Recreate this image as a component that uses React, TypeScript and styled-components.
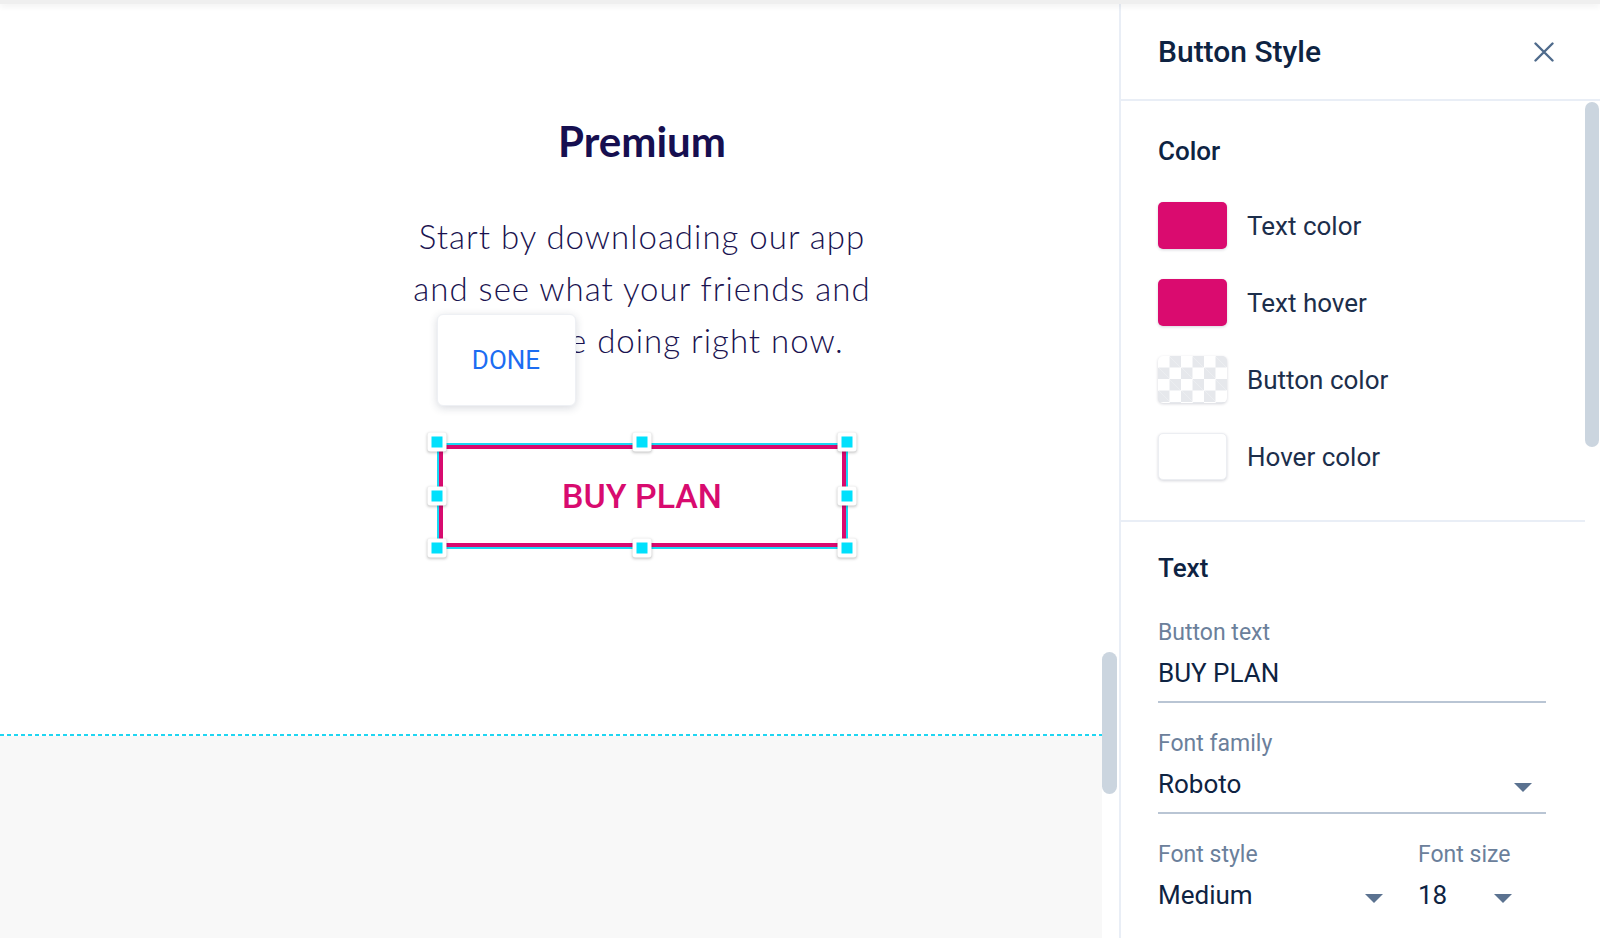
import React from "react";
import styled, { createGlobalStyle, css } from "styled-components";

const GlobalStyle = createGlobalStyle`
  html, body { margin: 0; padding: 0; background: #ffffff; }
  body { font-family: Roboto, "Liberation Sans", Arial, sans-serif; overflow: hidden; }
  * { box-sizing: border-box; }
`;

const Page = styled.div`
  width: 1600px;
  height: 938px;
  display: flex;
  flex-direction: column;
  overflow: hidden;
`;

const TopBar = styled.div`
  flex: 0 0 4px;
  height: 4px;
  background: #efefef;
  position: relative;
  z-index: 2;
  box-shadow: 0 2px 6px rgba(0, 0, 0, 0.08);
`;

const Main = styled.div`
  flex: 1;
  display: flex;
  min-height: 0;
`;

/* ---------- Canvas ---------- */

const Canvas = styled.div`
  flex: 0 0 1119px;
  position: relative;
  display: flex;
  flex-direction: column;
`;

const Stage = styled.section`
  flex: 0 0 730px;
  width: 1102px;
  padding: 113px 0 0 182px;
  display: flex;
  flex-direction: column;
  align-items: center;
`;

const Heading = styled.h1`
  margin: 0;
  font-family: Lato, "Open Sans", sans-serif;
  font-weight: 700;
  font-size: 42px;
  line-height: 48px;
  color: #160f50;
`;

const Lead = styled.p`
  margin: 45px 0 0;
  font-family: Lato, "Open Sans", sans-serif;
  font-weight: 300;
  font-size: 33px;
  letter-spacing: 1px;
  line-height: 52px;
  color: #1a1350;
  text-align: center;
  white-space: nowrap;
`;

const Frame = styled.div`
  position: relative;
  margin-top: 77px;
  width: 411px;
  height: 106px;
  border: 2px solid #18d9f5;
`;

const BuyButton = styled.button`
  width: 100%;
  height: 100%;
  border: 4px solid #d80b6f;
  background: #ffffff;
  color: #d80b6f;
  font-family: Roboto, sans-serif;
  font-weight: 500;
  font-size: 34px;
  padding: 0;
  cursor: pointer;
`;

type Pos = "start" | "mid" | "end";
const posX = (p: Pos) =>
  p === "start" ? "-1.5px" : p === "mid" ? "50%" : "calc(100% + 1px)";
const posY = (p: Pos) =>
  p === "start" ? "-3px" : p === "mid" ? "50%" : "calc(100% + 1px)";

const Handle = styled.span<{ $x: Pos; $y: Pos }>`
  position: absolute;
  width: 19px;
  height: 19px;
  border-radius: 3px;
  background: #ffffff;
  box-shadow: 0 1px 3px rgba(0, 0, 0, 0.22);
  transform: translate(-50%, -50%);
  ${({ $x, $y }) => css`
    left: ${posX($x)};
    top: ${posY($y)};
  `}
  &::after {
    content: "";
    position: absolute;
    left: 4px;
    top: 4px;
    width: 11px;
    height: 11px;
    background: #00e0fc;
  }
`;

const DonePopup = styled.button`
  position: absolute;
  left: -2px;
  top: -131px;
  width: 139px;
  height: 92px;
  border: 1px solid #eef0f4;
  border-radius: 6px;
  background: #ffffff;
  box-shadow: 0 2px 8px rgba(40, 50, 80, 0.18);
  display: flex;
  align-items: center;
  justify-content: center;
  font-family: Roboto, sans-serif;
  font-size: 26px;
  font-weight: 400;
  color: #1c6df2;
  padding: 0;
  cursor: pointer;
`;

const DashLine = styled.div`
  flex: 0 0 2px;
  width: 1102px;
  background: repeating-linear-gradient(90deg, #1fd6f2 0 4px, transparent 4px 7px);
`;

const LowerSection = styled.section`
  flex: 1;
  width: 1102px;
  background: #f8f8f8;
`;

const CanvasThumb = styled.div`
  position: absolute;
  left: 1102px;
  top: 648px;
  width: 15px;
  height: 142px;
  border-radius: 8px;
  background: #cbd5df;
`;

/* ---------- Panel ---------- */

const Panel = styled.aside`
  flex: 1;
  border-left: 2px solid #e9eef6;
  display: flex;
  flex-direction: column;
  padding-bottom: 18px;
  min-width: 0;
`;

const PanelHeader = styled.header`
  flex: 0 0 97px;
  height: 97px;
  border-bottom: 2px solid #e9eef6;
  display: flex;
  align-items: center;
  justify-content: space-between;
  padding: 0 46px 0 37px;
`;

const PanelTitle = styled.h2`
  margin: 0;
  font-size: 30px;
  font-weight: 500;
  color: #0e2342;
  line-height: 36px;
`;

const CloseButton = styled.button`
  width: 20px;
  height: 20px;
  padding: 0;
  border: 0;
  background: none;
  display: flex;
  cursor: pointer;
`;

const PanelBody = styled.div`
  flex: 1;
  position: relative;
  overflow: hidden;
`;

const PanelContent = styled.div`
  width: 464px;
`;

const PanelThumb = styled.div`
  position: absolute;
  right: 1px;
  top: 1px;
  width: 14px;
  height: 345px;
  border-radius: 7px;
  background: #cbd5df;
`;

const ColorSection = styled.section`
  padding: 35px 37px 40px;
  border-bottom: 2px solid #e9eef6;
`;

const TextSection = styled.section`
  padding: 31px 37px 0;
`;

const SectionTitle = styled.h3`
  margin: 0;
  font-size: 26px;
  font-weight: 500;
  line-height: 30px;
  color: #0e2342;
`;

const SwatchList = styled.div`
  margin-top: 36px;
  display: flex;
  flex-direction: column;
  gap: 30px;
`;

const SwatchRow = styled.div`
  display: flex;
  align-items: center;
  gap: 20px;
`;

type SwatchKind = "pink" | "transparent" | "white";

const Swatch = styled.span<{ $kind: SwatchKind }>`
  flex: 0 0 69px;
  width: 69px;
  height: 47px;
  border-radius: 5px;
  box-shadow: 0 1px 3px rgba(20, 30, 60, 0.18);
  ${({ $kind }) =>
    $kind === "pink"
      ? css`
          background: #da0b6f;
        `
      : $kind === "transparent"
      ? css`
          background-color: #ffffff;
          background-image: linear-gradient(45deg, #e6e8ec 25%, transparent 25%, transparent 75%, #e6e8ec 75%),
            linear-gradient(45deg, #e6e8ec 25%, transparent 25%, transparent 75%, #e6e8ec 75%);
          background-size: 23px 23px;
          background-position: 0 0, 11.5px 11.5px;
        `
      : css`
          background: #ffffff;
          border: 1px solid #eceef2;
        `}
`;

const SwatchLabel = styled.span`
  font-size: 26px;
  font-weight: 400;
  line-height: 30px;
  color: #1c2e4b;
`;

const Fields = styled.div`
  margin-top: 36px;
  display: flex;
  flex-direction: column;
  gap: 27px;
`;

const FieldRow = styled.div`
  display: grid;
  grid-template-columns: 239px 108px;
  column-gap: 21px;
`;

const Field = styled.div<{ $width?: number }>`
  display: flex;
  flex-direction: column;
  width: ${({ $width }) => ($width ? `${$width}px` : "388px")};
`;

const FieldLabel = styled.label`
  font-size: 23px;
  line-height: 27px;
  font-weight: 400;
  color: #6b809b;
`;

const ValueRow = styled.div`
  margin-top: 12px;
  padding-bottom: 13px;
  border-bottom: 2px solid #b9c5d4;
  display: flex;
  align-items: center;
  justify-content: space-between;
`;

const FieldValue = styled.span`
  font-size: 26px;
  line-height: 30px;
  font-weight: 400;
  color: #0e2342;
`;

const CaretIcon = styled.svg`
  flex: 0 0 18px;
  margin: 7px 14px 0 0;
`;

const Caret = () => (
  <CaretIcon width="18" height="9" viewBox="0 0 18 9">
    <path d="M0 0 H18 L9 9 Z" fill="#5b7290" />
  </CaretIcon>
);

const CloseIcon = () => (
  <svg width="20" height="20" viewBox="0 0 20 20">
    <path d="M1.5 1.5 L18.5 18.5 M18.5 1.5 L1.5 18.5" stroke="#4f6b8c" strokeWidth="2.4" strokeLinecap="round" />
  </svg>
);

const swatches: { kind: SwatchKind; label: string }[] = [
  { kind: "pink", label: "Text color" },
  { kind: "pink", label: "Text hover" },
  { kind: "transparent", label: "Button color" },
  { kind: "white", label: "Hover color" },
];

const handles: [Pos, Pos][] = [
  ["start", "start"],
  ["mid", "start"],
  ["end", "start"],
  ["start", "mid"],
  ["end", "mid"],
  ["start", "end"],
  ["mid", "end"],
  ["end", "end"],
];

export default function App() {
  return (
    <>
      <GlobalStyle />
      <Page>
        <TopBar />
        <Main>
          <Canvas>
            <Stage>
              <Heading>Premium</Heading>
              <Lead>
                Start by downloading our app
                <br />
                and see what your friends and
                <br />
                family are doing right now.
              </Lead>
              <Frame>
                <BuyButton>BUY PLAN</BuyButton>
                {handles.map(([x, y], i) => (
                  <Handle key={i} $x={x} $y={y} />
                ))}
                <DonePopup>DONE</DonePopup>
              </Frame>
            </Stage>
            <DashLine />
            <LowerSection />
            <CanvasThumb />
          </Canvas>
          <Panel>
            <PanelHeader>
              <PanelTitle>Button Style</PanelTitle>
              <CloseButton aria-label="Close">
                <CloseIcon />
              </CloseButton>
            </PanelHeader>
            <PanelBody>
              <PanelContent>
                <ColorSection>
                  <SectionTitle>Color</SectionTitle>
                  <SwatchList>
                    {swatches.map((s) => (
                      <SwatchRow key={s.label}>
                        <Swatch $kind={s.kind} />
                        <SwatchLabel>{s.label}</SwatchLabel>
                      </SwatchRow>
                    ))}
                  </SwatchList>
                </ColorSection>
                <TextSection>
                  <SectionTitle>Text</SectionTitle>
                  <Fields>
                    <Field>
                      <FieldLabel>Button text</FieldLabel>
                      <ValueRow>
                        <FieldValue>BUY PLAN</FieldValue>
                      </ValueRow>
                    </Field>
                    <Field>
                      <FieldLabel>Font family</FieldLabel>
                      <ValueRow>
                        <FieldValue>Roboto</FieldValue>
                        <Caret />
                      </ValueRow>
                    </Field>
                    <FieldRow>
                      <Field $width={239}>
                        <FieldLabel>Font style</FieldLabel>
                        <ValueRow>
                          <FieldValue>Medium</FieldValue>
                          <Caret />
                        </ValueRow>
                      </Field>
                      <Field $width={108}>
                        <FieldLabel>Font size</FieldLabel>
                        <ValueRow>
                          <FieldValue>18</FieldValue>
                          <Caret />
                        </ValueRow>
                      </Field>
                    </FieldRow>
                  </Fields>
                </TextSection>
              </PanelContent>
              <PanelThumb />
            </PanelBody>
          </Panel>
        </Main>
      </Page>
    </>
  );
}
